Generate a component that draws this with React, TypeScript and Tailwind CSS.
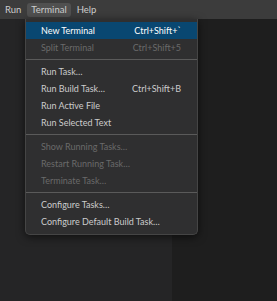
const font = { fontFamily: 'Lato, "Noto Sans", sans-serif' };

type Item =
  | { sep: true }
  | { sep?: false; label: string; keys?: string; disabled?: boolean; active?: boolean };

const ITEMS: Item[] = [
  { label: "New Terminal", keys: "Ctrl+Shift+`", active: true },
  { label: "Split Terminal", keys: "Ctrl+Shift+5", disabled: true },
  { sep: true },
  { label: "Run Task…" },
  { label: "Run Build Task…", keys: "Ctrl+Shift+B" },
  { label: "Run Active File" },
  { label: "Run Selected Text" },
  { sep: true },
  { label: "Show Running Tasks…", disabled: true },
  { label: "Restart Running Task…", disabled: true },
  { label: "Terminate Task…", disabled: true },
  { sep: true },
  { label: "Configure Tasks…" },
  { label: "Configure Default Build Task…" },
];

export default function App() {
  return (
    <div className="relative w-[277px] h-[301px] overflow-hidden bg-[#1e1e1e]" style={font}>
      {/* menu bar */}
      <div className="flex h-[19px] items-center bg-[#3c3c3c] pl-[1px] text-[9.5px] text-[#cccccc]">
        <span className="px-[4px] leading-[14px]">Run</span>
        <span className="ml-[2px] rounded-[3px] bg-[#505050] px-[4px] leading-[14px]">Terminal</span>
        <span className="ml-[2px] px-[4px] leading-[14px]">Help</span>
      </div>

      {/* workbench */}
      <div className="flex h-[282px]">
        <div className="w-[172px] bg-[#252526]" />
        <div className="flex-1 bg-[#1e1e1e]" />
      </div>

      {/* dropdown */}
      <div className="absolute left-[25px] top-[19px] w-[173px] rounded-b-[5px] border border-t-0 border-[#454545] bg-[#2f2f30] pt-[3px] pb-[4px] shadow-[0_2px_8px_rgba(0,0,0,0.6)]">
        {ITEMS.map((it, i) =>
          it.sep ? (
            <div key={i} className="py-[3px]">
              <div className="h-px bg-[#5a5a5a]" />
            </div>
          ) : (
            <div
              key={i}
              className={`flex h-[17px] items-center justify-between whitespace-nowrap pl-[15px] pr-[16px] text-[9px] ${
                it.active
                  ? "bg-[#094771] text-white"
                  : it.disabled
                  ? "text-[#6a6a6a]"
                  : "text-[#cccccc]"
              }`}
            >
              <span>{it.label}</span>
              {it.keys && <span>{it.keys}</span>}
            </div>
          )
        )}
      </div>
    </div>
  );
}
